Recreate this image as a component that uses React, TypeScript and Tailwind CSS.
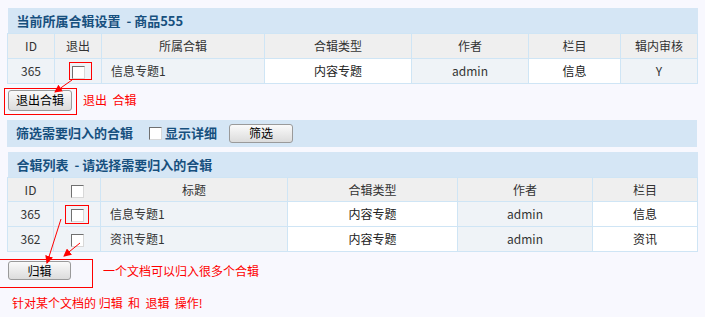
import React from "react";

const font = { fontFamily: '"Noto Sans CJK SC", "Noto Sans", sans-serif' };

function Box() {
  return (
    <span className="inline-block w-[13px] h-[13px] bg-white border border-t-[#707070] border-l-[#707070] border-b-[#d8d8d8] border-r-[#d8d8d8] align-middle" />
  );
}

function Btn({ label, className }: { label: string; className: string }) {
  return (
    <button
      className={
        "rounded-[3px] border border-[#9a9a9a] bg-gradient-to-b from-[#fafafa] to-[#dcdcdc] text-[12px] text-black leading-none " +
        className
      }
    >
      {label}
    </button>
  );
}

const th = "border border-[#cfe5f5] bg-[#efefef] font-normal text-[#333] text-center";
const tdA = "border border-[#cfe5f5] bg-[#eff3f7] text-[#333]";
const tdB = "border border-[#cfe5f5] bg-white text-[#222]";

export default function App() {
  return (
    <div
      className="relative w-[705px] h-[317px] bg-[#f8f8fe] overflow-hidden text-[12px]"
      style={font}
    >
      <div className="pl-[7px] pt-[8px] w-[697px]">
        {/* 当前所属合辑 */}
        <table className="w-[690px] border-collapse table-fixed">
          <colgroup>
            <col className="w-[47px]" />
            <col className="w-[47px]" />
            <col className="w-[163px]" />
            <col className="w-[147px]" />
            <col className="w-[117px]" />
            <col className="w-[92px]" />
            <col className="w-[77px]" />
          </colgroup>
          <thead>
            <tr className="h-[25px] bg-[#d5e6f5]">
              <th colSpan={7} className="text-left pl-[9px] text-[13px] font-bold text-[#17507e]">
                当前所属合辑设置 &nbsp;- 商品555
              </th>
            </tr>
            <tr className="h-[25px]">
              <th className={th}>ID</th>
              <th className={th}>退出</th>
              <th className={th}>所属合辑</th>
              <th className={th}>合辑类型</th>
              <th className={th}>作者</th>
              <th className={th}>栏目</th>
              <th className={th}>辑内审核</th>
            </tr>
          </thead>
          <tbody>
            <tr className="h-[25px]">
              <td className={tdA + " text-center"}>365</td>
              <td className={tdA + " text-center"}><Box /></td>
              <td className={tdA + " pl-[9px]"}>信息专题1</td>
              <td className={tdB + " text-center"}>内容专题</td>
              <td className={tdA + " text-center"}>admin</td>
              <td className={tdB + " text-center"}>信息</td>
              <td className={tdA + " text-center"}>Y</td>
            </tr>
          </tbody>
        </table>

        <div className="flex items-center h-[21px] mt-[6px] mb-[9px] pl-[1px]">
          <Btn label="退出合辑" className="w-[64px] h-[21px]" />
          <span className="ml-[11px] text-[#ff0000]">退出 &nbsp;合辑</span>
        </div>

        {/* 筛选 */}
        <div className="flex items-center h-[27px] bg-[#d5e6f5] pl-[9px] text-[13px] font-bold text-[#17507e]">
          <span>筛选需要归入的合辑</span>
          <span className="ml-[16px] flex items-center">
            <Box />
            <span className="ml-[3px]">显示详细</span>
          </span>
          <Btn label="筛选" className="ml-[12px] w-[64px] h-[19px] font-normal" />
        </div>

        {/* 合辑列表 */}
        <table className="mt-[5px] w-[690px] border-collapse table-fixed">
          <colgroup>
            <col className="w-[46px]" />
            <col className="w-[47px]" />
            <col className="w-[187px]" />
            <col className="w-[170px]" />
            <col className="w-[135px]" />
            <col className="w-[105px]" />
          </colgroup>
          <thead>
            <tr className="h-[26px] bg-[#d5e6f5]">
              <th colSpan={6} className="text-left pl-[9px] text-[13px] font-bold text-[#17507e]">
                合辑列表 &nbsp;- 请选择需要归入的合辑
              </th>
            </tr>
            <tr className="h-[24px]">
              <th className={th}>ID</th>
              <th className={th}><Box /></th>
              <th className={th}>标题</th>
              <th className={th}>合辑类型</th>
              <th className={th}>作者</th>
              <th className={th}>栏目</th>
            </tr>
          </thead>
          <tbody>
            {[
              ["365", "信息专题1", "信息"],
              ["362", "资讯专题1", "资讯"],
            ].map(([id, title, col]) => (
              <tr key={id} className="h-[25px]">
                <td className={tdA + " text-center"}>{id}</td>
                <td className={tdA + " text-center"}><Box /></td>
                <td className={tdA + " pl-[9px]"}>{title}</td>
                <td className={tdB + " text-center"}>内容专题</td>
                <td className={tdA + " text-center"}>admin</td>
                <td className={tdB + " text-center"}>{col}</td>
              </tr>
            ))}
          </tbody>
        </table>

        <div className="flex items-center h-[19px] mt-[9px] pl-[1px]">
          <Btn label="归辑" className="w-[63px] h-[19px]" />
          <span className="ml-[32px] text-[#ff0000]">一个文档可以归入很多个合辑</span>
        </div>

        <div className="mt-[14px] pl-[5px] text-[#ff0000]">针对某个文档的 归辑 &nbsp;和 &nbsp;退辑 &nbsp;操作!</div>
      </div>

      {/* annotations */}
      <div className="absolute left-[69px] top-[62px] w-[23px] h-[18px] border border-[#ff0000]" />
      <div className="absolute left-[4px] top-[88px] w-[73px] h-[27px] border border-[#ff0000]" />
      <div className="absolute left-[65px] top-[205px] w-[24px] h-[19px] border border-[#ff0000]" />
      <div className="absolute left-[-1px] top-[259px] w-[94px] h-[29px] border border-[#ff0000]" />
      <svg className="absolute left-0 top-0" width="705" height="317">
        <defs>
          <marker id="ah" markerWidth="8" markerHeight="8" refX="7" refY="4" orient="auto" markerUnits="userSpaceOnUse">
            <path d="M0,0 L8,4 L0,8 Z" fill="#ff0000" />
          </marker>
        </defs>
        <g stroke="#ff0000" strokeWidth="1" fill="none">
          <line x1="72" y1="80" x2="55" y2="92" markerEnd="url(#ah)" />
          <line x1="61" y1="219" x2="47" y2="263" markerEnd="url(#ah)" />
          <line x1="80" y1="243" x2="64" y2="256" markerEnd="url(#ah)" />
        </g>
      </svg>
    </div>
  );
}
